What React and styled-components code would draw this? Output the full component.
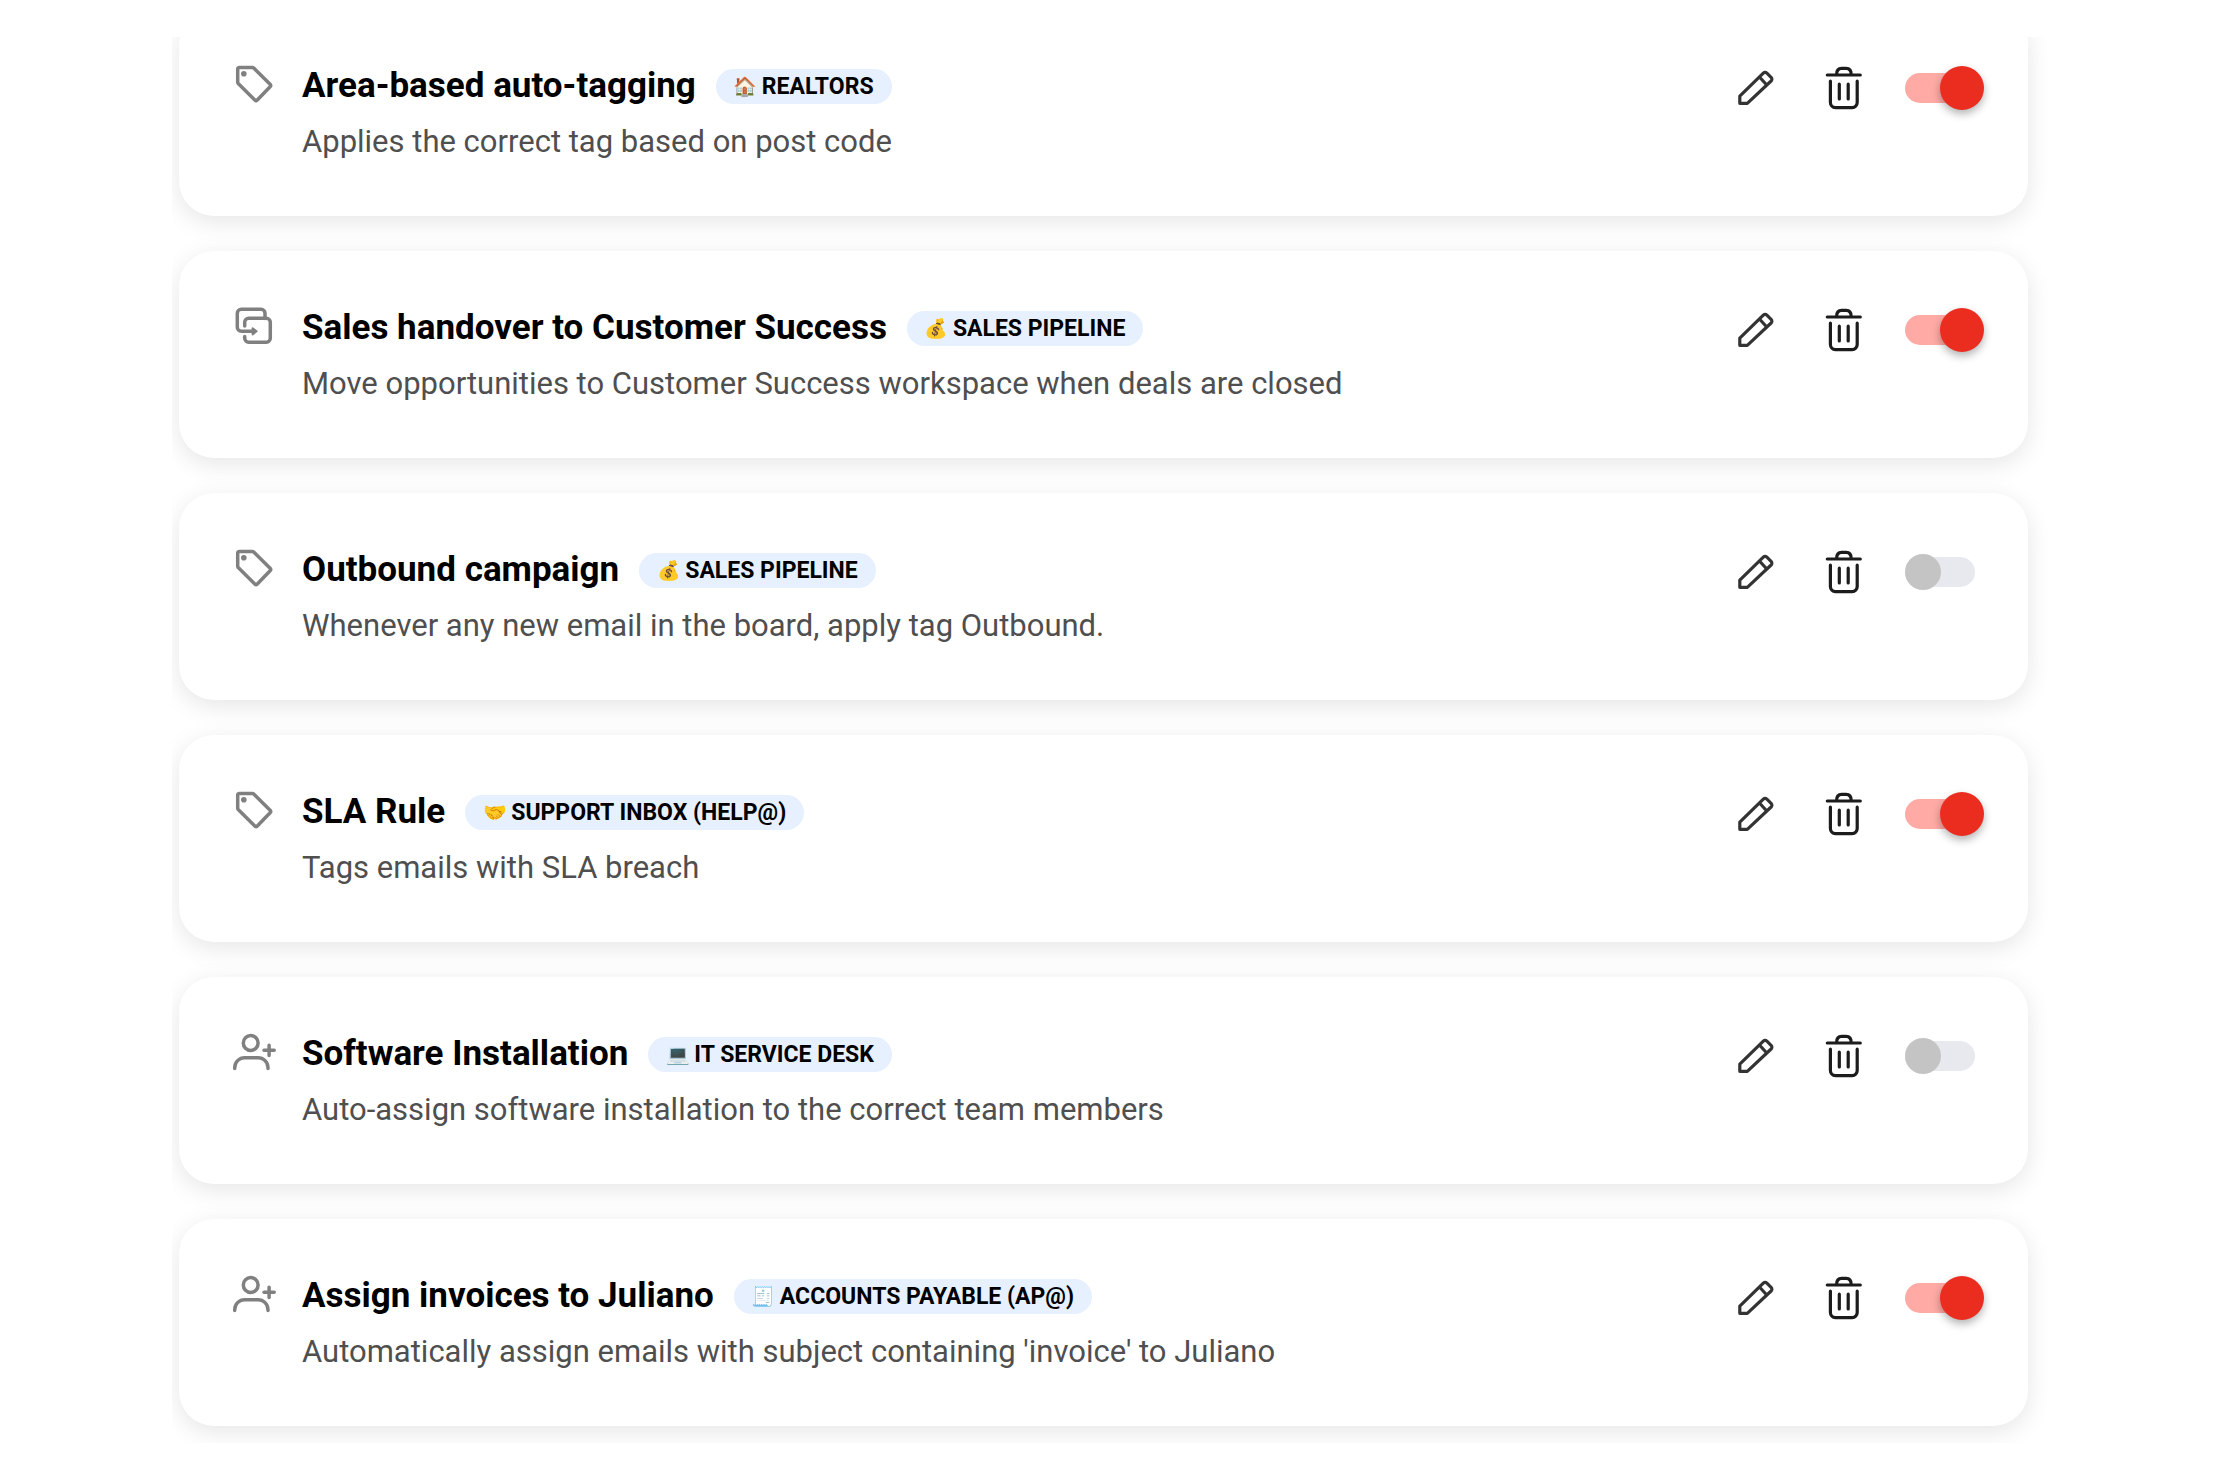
import React, { useState } from "react";
import styled, { createGlobalStyle } from "styled-components";

const GlobalStyle = createGlobalStyle`
  *, *::before, *::after { box-sizing: border-box; }
  body { margin: 0; background: #fff; font-family: Roboto, "Noto Sans", sans-serif; color: #000; }
`;

const Page = styled.main`
  height: 100vh;
  padding: 37px 172px;
`;

/* The list is scrolled to its end, so the first card runs under the top edge. */
const Viewport = styled.div`
  height: 100%;
  padding: 0 20px 17px 7px;
  overflow: hidden;
  display: flex;
  flex-direction: column;
  justify-content: flex-end;
`;

const RuleList = styled.ul`
  list-style: none;
  margin: 0;
  padding: 0;
  display: flex;
  flex-direction: column;
  gap: 35px;
`;

const Card = styled.li`
  display: flex;
  align-items: flex-start;
  padding: 52px 44px 50px 52px;
  border-radius: 35px;
  background: #fff;
  box-shadow: 0 6px 24px rgba(0, 0, 0, 0.1);
`;

const KindIcon = styled.svg`
  flex: none;
  width: 48px;
  height: 44px;
  fill: none;
  stroke: #808080;
  stroke-width: 3.5;
  stroke-linecap: round;
  stroke-linejoin: round;
`;

const Body = styled.div`
  flex: 1;
  min-width: 0;
  margin-left: 23px;
`;

const Heading = styled.div`
  display: flex;
  align-items: center;
  gap: 20px;
`;

const Title = styled.h2`
  margin: 0;
  font-size: 35px;
  line-height: 50px;
  font-weight: 700;
`;

const Badge = styled.span`
  display: inline-flex;
  align-items: center;
  gap: 5px;
  padding: 0 18px;
  border-radius: 18px;
  background: #e7f0ff;
  font-size: 23px;
  line-height: 35px;
  font-weight: 700;
  text-transform: uppercase;
  white-space: nowrap;
`;

const Emoji = styled.span`
  display: inline-flex;
  justify-content: center;
  width: 23px;
  font-family: "Noto Color Emoji", sans-serif;
  font-size: 19px;
`;

const Description = styled.p`
  margin: 7px 0 0;
  font-size: 31px;
  line-height: 48px;
  color: #4f4f4f;
`;

const Actions = styled.div`
  display: flex;
  align-items: center;
  gap: 35px;
  height: 54px;
`;

const IconButton = styled.button`
  display: grid;
  place-items: center;
  width: 52px;
  height: 52px;
  padding: 0;
  border: 0;
  background: none;
  color: ${(p) => p.$color};
  cursor: pointer;
`;

const ActionIcon = styled.svg`
  width: 44px;
  height: 44px;
  fill: none;
  stroke: currentColor;
  stroke-width: 3.2;
  stroke-linecap: round;
  stroke-linejoin: round;
`;

const Switch = styled.input`
  appearance: none;
  display: grid;
  align-items: center;
  width: 79px;
  height: 44px;
  margin: 0;
  cursor: pointer;

  &::before,
  &::after {
    content: "";
    grid-area: 1 / 1;
  }
  &::before {
    width: 70px;
    height: 30px;
    border-radius: 15px;
    background: #e8e9ee;
  }
  &::after {
    width: 36px;
    height: 36px;
    border-radius: 50%;
    background: #c4c4c4;
  }
  &:checked::before {
    background: #ffaaa5;
  }
  &:checked::after {
    justify-self: end;
    width: 44px;
    height: 44px;
    background: #eb2d20;
    box-shadow: 0 4px 8px rgba(0, 0, 0, 0.3);
  }
`;

const kinds = {
  tag: (
    <>
      <path d="M8.5 6.4h12.8a2 2 0 0 1 1.4.6l16.4 16.2a1.8 1.8 0 0 1 0 2.5L26.3 39a1.8 1.8 0 0 1-2.5 0L7.2 22.6a1.8 1.8 0 0 1-.5-1.3V8.2a1.8 1.8 0 0 1 1.8-1.8z" />
      <circle cx="12.8" cy="12.7" r="2.8" fill="#808080" stroke="none" />
    </>
  ),
  move: (
    <>
      <path d="M34 15.6V10.3a4 4 0 0 0-4-4H10.3a4 4 0 0 0-4 4v14a4 4 0 0 0 4 4h12" />
      <path d="M13.7 23v-3.7a4 4 0 0 1 4-4h17.6a4 4 0 0 1 4 4v16a4 4 0 0 1-4 4H17.7a4 4 0 0 1-4-4V33.5" />
      <path d="M21.6 25.2l4 3.1-4 3.1z" fill="#808080" strokeWidth="2" />
    </>
  ),
  assign: (
    <>
      <circle cx="19.7" cy="14" r="7.4" />
      <path d="M3.7 39.5v-.8a10 10 0 0 1 10-10h13.3a10 10 0 0 1 10 10v.8" />
      <path d="M33 21.2h10.2M38.1 16.2v10.2" />
    </>
  ),
};

const rules = [
  { kind: "tag", title: "Area-based auto-tagging", emoji: "🏠", board: "Realtors", text: "Applies the correct tag based on post code", on: true },
  { kind: "move", title: "Sales handover to Customer Success", emoji: "💰", board: "Sales pipeline", text: "Move opportunities to Customer Success workspace when deals are closed", on: true },
  { kind: "tag", title: "Outbound campaign", emoji: "💰", board: "Sales pipeline", text: "Whenever any new email in the board, apply tag Outbound.", on: false },
  { kind: "tag", title: "SLA Rule", emoji: "🤝", board: "Support inbox (help@)", text: "Tags emails with SLA breach", on: true },
  { kind: "assign", title: "Software Installation", emoji: "💻", board: "IT service desk", text: "Auto-assign software installation to the correct team members", on: false },
  { kind: "assign", title: "Assign invoices to Juliano", emoji: "🧾", board: "Accounts payable (ap@)", text: "Automatically assign emails with subject containing 'invoice' to Juliano", on: true },
];

function Rule({ kind, title, emoji, board, text, on }) {
  const [enabled, setEnabled] = useState(on);
  return (
    <Card>
      <KindIcon viewBox="0 0 48 44" aria-hidden="true">{kinds[kind]}</KindIcon>
      <Body>
        <Heading>
          <Title>{title}</Title>
          <Badge>
            <Emoji>{emoji}</Emoji>
            <span>{board}</span>
          </Badge>
        </Heading>
        <Description>{text}</Description>
      </Body>
      <Actions>
        <IconButton type="button" aria-label={`Edit ${title}`} $color="#333">
          <ActionIcon viewBox="0 0 44 44">
            <path d="M4.8 37.3V30.2L28.3 7.2a2.6 2.6 0 0 1 3.6 0l4.2 4.1a2.6 2.6 0 0 1 0 3.7L12.3 37.3zM24.5 11l7 7.8" />
          </ActionIcon>
        </IconButton>
        <IconButton type="button" aria-label={`Delete ${title}`} $color="#1c1c1c">
          <ActionIcon viewBox="0 0 44 44">
            <path d="M5.3 9h33M14.6 8.4c0-4.2 1.6-6.1 5-6.1h4.6c3.4 0 5 1.9 5 6.1M8.4 15.2v21.4a5 5 0 0 0 5 5h16.8a5 5 0 0 0 5-5V15.2M17.3 18.2v14.8M26.2 18.2v14.8" />
          </ActionIcon>
        </IconButton>
        <Switch
          type="checkbox"
          role="switch"
          aria-label={`${title} enabled`}
          checked={enabled}
          onChange={(e) => setEnabled(e.target.checked)}
        />
      </Actions>
    </Card>
  );
}

export default function App() {
  return (
    <>
      <GlobalStyle />
      <Page>
        <Viewport>
          <RuleList>
            {rules.map((rule) => (
              <Rule key={rule.title} {...rule} />
            ))}
          </RuleList>
        </Viewport>
      </Page>
    </>
  );
}
